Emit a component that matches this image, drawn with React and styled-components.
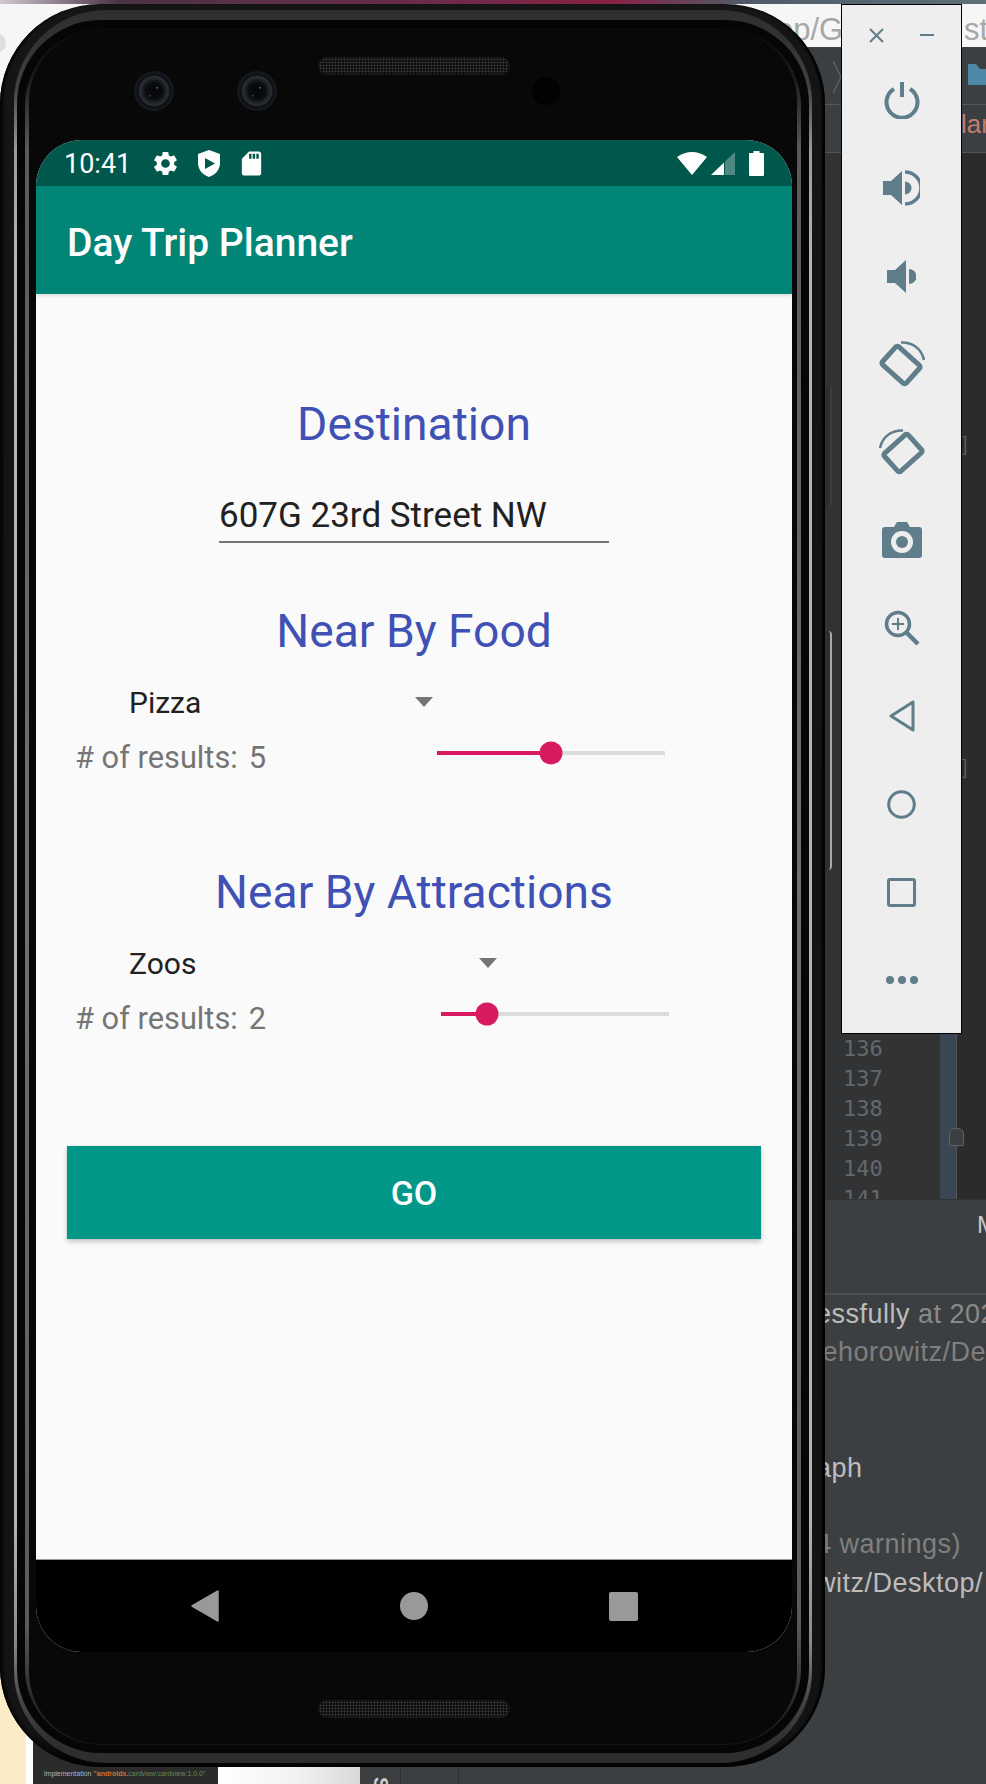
import React from 'react';
import styled, { createGlobalStyle } from 'styled-components';
import { MdSettings, MdSdCard } from 'react-icons/md';

const GlobalStyle = createGlobalStyle`
  html, body {
    margin: 0;
    padding: 0;
    background: #3c3f41;
  }
  * { box-sizing: border-box; }
`;

const PICKERS = [
  { title: 'Near By Food', choice: 'Pizza', spinner: 304, results: 5, sliderGap: 161, gapTop: 61 },
  { title: 'Near By Attractions', choice: 'Zoos', spinner: 368, results: 2, sliderGap: 165, gapTop: 89 }
];

const LINE_NUMBERS = [136, 137, 138, 139, 140, 141];

export default function App() {
  return (
    <Stage>
      <GlobalStyle />
      <Backdrop />
      <Phone />
      <EmulatorPanel />
    </Stage>
  );
}

function Backdrop() {
  return (
    <Desktop>
      <TitleStrip />
      <AddressBar>
        <span>op/G</span>
        <UrlRight>st</UrlRight>
      </AddressBar>
      <IdeToolbar>
        <Chevron viewBox="0 0 10 32"><path d="M1 0 L9 16 L1 32" /></Chevron>
        <Folder viewBox="0 0 18 21"><path d="M0 0 H8 L12 5 H18 V21 H0 Z" /></Folder>
      </IdeToolbar>
      <IdeTabs><TabLabel>lar</TabLabel></IdeTabs>
      <Editor>
        <Gutter>
          <LineNumbers>
            {LINE_NUMBERS.map(n => <LineNumber key={n}>{n}</LineNumber>)}
          </LineNumbers>
        </Gutter>
        <FoldColumn>
          <FoldMark />
        </FoldColumn>
        <CodeArea>
          <Bracket>]</Bracket>
          <Bracket $gap={300}>]</Bracket>
        </CodeArea>
      </Editor>
      <EditorTabs><EditorTabLabel>M</EditorTabLabel></EditorTabs>
      <ConsoleHead />
      <Console>
        <ConsoleRow>
          <strong>essfully</strong> <span>at 202</span>
        </ConsoleRow>
        <ConsoleRow $dim>iehorowitz/De</ConsoleRow>
        <ConsoleRow />
        <ConsoleRow />
        <ConsoleRow><strong>aph</strong></ConsoleRow>
        <ConsoleRow />
        <ConsoleRow $dim>4 warnings)</ConsoleRow>
        <ConsoleRow><strong>witz/Desktop/</strong></ConsoleRow>
      </Console>
      <PageCorner><PageDot /></PageCorner>
      <FootWindows>
        <CreamPane />
        <GradleCode>
          <Code>
            implementation <CodeKey>"androidx.</CodeKey><CodeString>cardview:cardview:1.0.0"</CodeString>
          </Code>
        </GradleCode>
        <PaperPane />
        <FootTab><FootTabLetter>S</FootTabLetter></FootTab>
        <EmptyFootTab />
      </FootWindows>
    </Desktop>
  );
}

function Phone() {
  return (
    <Handset>
      <SideButton $top={382} $height={120} />
      <SideButton $top={627} $height={239} $lit />
      <Body>
        <OuterRing>
          <Channel>
            <InnerRing>
              <Bezel>
                <TopBezel>
                  <CameraLens $left={105} />
                  <CameraLens $left={63} />
                  <TopSpeaker />
                  <FrontSensor />
                </TopBezel>
                <Screen>
                  <StatusBar>
                    <Clock>10:41</Clock>
                    <StatusIcons>
                      <MdSettings size={29} />
                      <ShieldIcon />
                      <MdSdCard size={29} />
                    </StatusIcons>
                    <SystemIcons>
                      <WifiIcon />
                      <SignalIcon />
                      <BatteryIcon />
                    </SystemIcons>
                  </StatusBar>
                  <AppBar>Day Trip Planner</AppBar>
                  <Content>
                    <Heading $gapTop={103}>Destination</Heading>
                    <AddressField>607G 23rd Street NW</AddressField>
                    {PICKERS.map(picker => (
                      <Picker key={picker.title} {...picker} />
                    ))}
                    <GoButton>GO</GoButton>
                  </Content>
                  <NavBar>
                    <NavBack viewBox="0 0 28 32"><path d="M27 1 V31 L1 16 Z" /></NavBack>
                    <NavHome />
                    <NavRecents />
                  </NavBar>
                </Screen>
                <BottomBezel>
                  <BottomSpeaker />
                </BottomBezel>
              </Bezel>
            </InnerRing>
          </Channel>
        </OuterRing>
      </Body>
    </Handset>
  );
}

function Picker({ title, choice, spinner, results, sliderGap, gapTop }) {
  return (
    <>
      <Heading $gapTop={gapTop}>{title}</Heading>
      <Spinner $width={spinner}>
        <span>{choice}</span>
        <SpinnerArrow />
      </Spinner>
      <ResultsRow>
        <ResultsLabel>
          <span># of results:</span>
          <span>{results}</span>
        </ResultsLabel>
        <Slider $gap={sliderGap}>
          <SliderFill style={{ width: `${results * 10}%` }} />
          <SliderThumb style={{ left: `${results * 10}%` }} />
        </Slider>
      </ResultsRow>
    </>
  );
}

function EmulatorPanel() {
  return (
    <Panel>
      <PanelHead>
        <PanelSvg width="15" height="15" viewBox="0 0 15 15"><Stroke $w={2} d="M1 1 L14 14 M14 1 L1 14" /></PanelSvg>
        <PanelSvg width="14" height="2" viewBox="0 0 14 2"><rect width="14" height="2" /></PanelSvg>
      </PanelHead>
      <PanelSlot>
        <PanelSvg width="36" height="37" viewBox="0 0 36 37">
          <Stroke $w={4} d="M10 7 A15.5 15.5 0 1 0 26 7" />
          <Stroke $w={4} d="M18 0 V15" />
        </PanelSvg>
      </PanelSlot>
      <PanelSlot>
        <PanelSvg width="37" height="36" viewBox="0 0 37 36">
          <path d="M0 11 H8 L19 1 V35 L8 25 H0 Z" />
          <path d="M22 11.5 A6.5 6.5 0 0 1 22 24.5 Z" />
          <Stroke $w={3.5} d="M22 2 A16 16 0 0 1 22 34" />
        </PanelSvg>
      </PanelSlot>
      <PanelSlot>
        <PanelSvg width="29" height="33" viewBox="0 0 29 33">
          <path d="M0 10 H8 L19 0 V33 L8 23 H0 Z" />
          <path d="M22 9 A7.5 7.5 0 0 1 22 24 Z" />
        </PanelSvg>
      </PanelSlot>
      <PanelSlot>
        <RotateIcon />
      </PanelSlot>
      <PanelSlot>
        <RotateIcon $flip />
      </PanelSlot>
      <PanelSlot>
        <PanelSvg width="40" height="36" viewBox="0 0 40 36">
          <path d="M3 5 H12 L15 0 H25 L28 5 H37 A3 3 0 0 1 40 8 V33 A3 3 0 0 1 37 36 H3 A3 3 0 0 1 0 33 V8 A3 3 0 0 1 3 5 Z" />
          <circle cx="20" cy="20" r="11" fill="#eeeeee" />
          <circle cx="20" cy="20" r="6" />
        </PanelSvg>
      </PanelSlot>
      <PanelSlot>
        <PanelSvg width="36" height="36" viewBox="0 0 36 36">
          <Stroke $w={3.5} as="circle" cx="14" cy="14" r="11.5" />
          <Stroke $w={2} d="M14 8 V20 M8 14 H20" />
          <Stroke $w={4.5} d="M22 22 L34 34" />
        </PanelSvg>
      </PanelSlot>
      <PanelSlot>
        <PanelSvg width="27" height="32" viewBox="0 0 27 32">
          <Stroke $w={3} $join d="M25 2 V30 L3 16 Z" />
        </PanelSvg>
      </PanelSlot>
      <PanelSlot>
        <PanelSvg width="29" height="29" viewBox="0 0 29 29">
          <Stroke $w={3} as="circle" cx="14.5" cy="14.5" r="12.8" />
        </PanelSvg>
      </PanelSlot>
      <PanelSlot>
        <PanelSvg width="29" height="29" viewBox="0 0 29 29">
          <Stroke $w={3} as="rect" x="1.5" y="1.5" width="26" height="26" rx="1.5" />
        </PanelSvg>
      </PanelSlot>
      <PanelSlot>
        <PanelSvg width="32" height="8" viewBox="0 0 32 8">
          <circle cx="4" cy="4" r="4" />
          <circle cx="16" cy="4" r="4" />
          <circle cx="28" cy="4" r="4" />
        </PanelSvg>
      </PanelSlot>
    </Panel>
  );
}

function RotateIcon({ $flip }) {
  return (
    <RotateSvg $flip={$flip} width="46" height="46" viewBox="0 0 46 46">
      <Stroke $w={5} $join as="rect" x="6" y="12" width="32" height="24" rx="2" transform="rotate(42 22 24)" />
      <Stroke $w={2.5} d="M22 1.5 C32 1 42 6 45 19" />
    </RotateSvg>
  );
}

function ShieldIcon() {
  return (
    <svg width="22" height="27" viewBox="0 0 22 27" fill="#fff">
      <path
        fillRule="evenodd"
        d="M11 0 L22 4 V13 C22 20 17 25 11 27 C5 25 0 20 0 13 V4 Z M7 8 V19 L17 13.5 Z"
      />
    </svg>
  );
}

function WifiIcon() {
  return (
    <svg width="30" height="23" viewBox="0 0 30 23" fill="#fff">
      <path d="M15 23 L0 5 Q15 -5 30 5 Z" />
    </svg>
  );
}

function SignalIcon() {
  return (
    <svg width="24" height="23" viewBox="0 0 24 23" fill="#fff">
      <path d="M13 10.5 V23 H0 Z" />
      <path d="M24 0 V23 H14 V9.5 Z" opacity="0.3" />
    </svg>
  );
}

function BatteryIcon() {
  return (
    <svg width="15" height="25" viewBox="0 0 15 25" fill="#fff">
      <path d="M4.5 0 H10.5 V2 H14 A1 1 0 0 1 15 3 V24 A1 1 0 0 1 14 25 H1 A1 1 0 0 1 0 24 V3 A1 1 0 0 1 1 2 H4.5 Z" />
    </svg>
  );
}

/* desktop behind the emulator */

const Stage = styled.div`
  position: relative;
  width: 986px;
  height: 1784px;
  overflow: hidden;
  font-family: Roboto, sans-serif;
`;

const Desktop = styled.div`
  position: absolute;
  inset: 0;
  display: flex;
  flex-flow: column nowrap;
  background: #3c3f41;
  font-family: 'Liberation Sans', sans-serif;
`;

const TitleStrip = styled.div`
  height: 4px;
  background: linear-gradient(to right, #cfc9cf 0, #4b3346 12%, #6d2b48 45%, #8a2147 62%, #4f5a66 75%, #5e7078 100%);
`;

const AddressBar = styled.div`
  height: 43px;
  display: flex;
  align-items: center;
  justify-content: space-between;
  padding: 8px 0 0 776px;
  background: #f6f6f6;
  font-size: 31px;
  line-height: 34px;
  color: #a8a8a8;
  overflow: hidden;
  white-space: nowrap;
`;

const UrlRight = styled.span`
  margin-right: -2px;
`;

const IdeToolbar = styled.div`
  height: 58px;
  display: flex;
  align-items: flex-start;
  justify-content: space-between;
  padding: 14px 0 0 832px;
  background: #3c3f41;
  border-bottom: 1px solid #55585a;
`;

const Chevron = styled.svg`
  width: 10px;
  height: 32px;
  fill: none;
  stroke: #5e6163;
  stroke-width: 1.5;
`;

const Folder = styled.svg`
  width: 18px;
  height: 21px;
  margin-top: 3px;
  fill: #4f87a6;
`;

const IdeTabs = styled.div`
  height: 48px;
  padding: 4px 0 0 961px;
  background: #3c3f41;
  border-bottom: 1px solid #505355;
  overflow: hidden;
`;

const TabLabel = styled.span`
  font-size: 26px;
  color: #c27d6c;
`;

const Editor = styled.div`
  height: 1046px;
  display: flex;
  flex-flow: row nowrap;
`;

const Gutter = styled.div`
  width: 940px;
  flex: none;
  display: flex;
  flex-flow: column nowrap;
  justify-content: flex-end;
  padding-left: 843px;
  background: #313335;
  overflow: hidden;
`;

const LineNumbers = styled.div`
  margin-bottom: -15px;
`;

const LineNumber = styled.div`
  height: 30px;
  line-height: 30px;
  font-family: 'DejaVu Sans Mono', monospace;
  font-size: 22px;
  color: #65686b;
`;

const FoldColumn = styled.div`
  position: relative;
  width: 17px;
  flex: none;
  background: #3a4654;
  border-right: 1px solid #555;
`;

const FoldMark = styled.div`
  position: absolute;
  right: -8px;
  bottom: 53px;
  width: 15px;
  height: 18px;
  background: #3c3f41;
  border: 1px solid #5e6163;
  border-radius: 6px 6px 1px 1px;
`;

const CodeArea = styled.div`
  flex: 1;
  padding: 280px 0 0 5px;
  background: #2b2b2b;
`;

const Bracket = styled.div`
  margin-top: ${p => p.$gap || 0}px;
  font-size: 20px;
  color: #5a5a5a;
`;

const EditorTabs = styled.div`
  height: 46px;
  padding: 11px 0 0 977px;
  background: #3c3f41;
  border-top: 1px solid #333;
  overflow: hidden;
`;

const EditorTabLabel = styled.span`
  font-size: 24px;
  color: #c8c8c8;
`;

const ConsoleHead = styled.div`
  height: 50px;
  background: #3c3f41;
  border-bottom: 2px solid #4b4e50;
`;

const Console = styled.div`
  flex: 1;
  padding-left: 816px;
  background: #3c3f41;
  font-size: 27px;
  letter-spacing: 0.5px;
  color: #8a8a8a;
  white-space: nowrap;
  overflow: hidden;

  strong {
    font-weight: 400;
    color: #bcbcbc;
  }
`;

const ConsoleRow = styled.div`
  height: 38.4px;
  line-height: 38.4px;
  color: ${p => (p.$dim ? '#7f7f7f' : '#8a8a8a')};
`;

const PageCorner = styled.div`
  position: absolute;
  left: 0;
  top: 4px;
  width: 60px;
  height: 100px;
  background: #f6f6f6;
`;

const PageDot = styled.div`
  position: absolute;
  left: -14px;
  top: 29px;
  width: 20px;
  height: 20px;
  border-radius: 50%;
  background: #dedede;
`;

const FootWindows = styled.div`
  position: absolute;
  left: 0;
  bottom: 0;
  height: 124px;
  display: flex;
  flex-flow: row nowrap;
`;

const CreamPane = styled.div`
  width: 33px;
  background: #fbecc8;
  border-right: 7px solid;
  border-image: linear-gradient(to right, #e39a3c 43%, #ffffff 43%) 1;
`;

const GradleCode = styled.div`
  width: 185px;
  display: flex;
  align-items: flex-end;
  padding: 0 0 6px 11px;
  background: #2b2b2b;
`;

const Code = styled.span`
  font-size: 7px;
  line-height: 8px;
  color: #a9b7c6;
  white-space: nowrap;
`;

const CodeKey = styled.span`
  font-weight: 700;
  color: #cc7832;
`;

const CodeString = styled.span`
  color: #6a8759;
`;

const PaperPane = styled.div`
  width: 142px;
  background: linear-gradient(to right, #ffffff, #f2f2f2 55%, #d9d9d9);
`;

const FootTab = styled.div`
  width: 41px;
  display: flex;
  align-items: flex-end;
  justify-content: center;
  background: #3c3f41;
  border-right: 1px solid #2f3133;
  overflow: hidden;
`;

const FootTabLetter = styled.span`
  writing-mode: vertical-rl;
  margin-bottom: -6px;
  font-size: 20px;
  font-weight: 700;
  color: #cfcfcf;
`;

const EmptyFootTab = styled.div`
  width: 58px;
  background: #3c3f41;
  border-right: 1px solid #2f3133;
`;

/* the phone frame */

const Handset = styled.div`
  position: absolute;
  left: 0;
  top: 4px;
  width: 825px;
  height: 1763px;
`;

const SideButton = styled.div`
  position: absolute;
  top: ${p => p.$top}px;
  right: -7px;
  width: 8px;
  height: ${p => p.$height}px;
  background: #2c2e30;
  border-right: 2px solid ${p => (p.$lit ? '#a9a9a9' : '#3a3c3e')};
  border-radius: 0 4px 4px 0;
`;

const Body = styled.div`
  position: relative;
  height: 100%;
  padding: 6px 13px 4px 14px;
  background: linear-gradient(to bottom, #151515 0, #131313 98%, #040404 99.6%);
  border-radius: 100px;
  box-shadow: inset 4px 0 2px -1px #060606, inset -4px 0 2px -1px #020202;
`;

const OuterRing = styled.div`
  height: 100%;
  padding: 10px 3px 10px 3px;
  border-radius: 92px;
  background: linear-gradient(
    to bottom,
    #2f2f2f 0,
    #333 2%,
    #444 4.5%,
    #9a9a9a 8%,
    #b5b5b5 14%,
    #b5b5b5 86%,
    #8a8a8a 93%,
    #444 96.5%,
    #2e2e2e 99%
  );
`;

const Channel = styled.div`
  height: 100%;
  padding: 9px 8px 8px;
  border-radius: 84px;
  background: #060606;
`;

const InnerRing = styled.div`
  height: 100%;
  padding: 1px 4px;
  border-radius: 76px;
  background: linear-gradient(to bottom, #0b0b0b 0, #1c1c1c 3%, #5a5a5a 7%, #707070 50%, #5a5a5a 93%, #222 98%, #141414 100%);
`;

const Bezel = styled.div`
  height: 100%;
  display: flex;
  flex-flow: column nowrap;
  padding: 0 5px 0 7px;
  border-radius: 72px;
  background: #080808;
`;

const TopBezel = styled.div`
  height: 110px;
  flex: none;
  display: flex;
  flex-flow: row nowrap;
  align-items: flex-start;
  margin: 0 -5px 0 -7px;
`;

const CameraLens = styled.div`
  width: 40px;
  height: 40px;
  flex: none;
  margin: 41px 0 0 ${p => p.$left}px;
  border-radius: 50%;
  background:
    radial-gradient(circle at 58% 42%, #8a8fb0 0, transparent 4%),
    radial-gradient(circle at 40% 62%, #6b6f80 0, transparent 3%),
    radial-gradient(circle at 50% 50%, #05060a 0, #0a0c10 30%, #2b2f36 50%, #0a0b0e 58%, #14181d 62%, #14181d 100%);
`;

const Mesh = styled.div`
  width: 192px;
  height: 18px;
  flex: none;
  border-radius: 9px;
  border: 1px solid #191919;
  background-color: #0d0d0d;
  background-image: radial-gradient(circle, #3a3a3a 0.9px, transparent 1.1px);
  background-size: 3px 3px;
`;

const TopSpeaker = styled(Mesh)`
  margin: 27px 0 0 41px;
`;

const FrontSensor = styled.div`
  width: 28px;
  height: 28px;
  flex: none;
  margin: 47px 0 0 22px;
  border-radius: 50%;
  background: #020202;
`;

const BottomBezel = styled.div`
  height: 92px;
  flex: none;
  display: flex;
  justify-content: center;
  padding-top: 48px;
`;

const BottomSpeaker = styled(Mesh)``;

/* the app on the screen */

const Screen = styled.div`
  height: 1512px;
  flex: none;
  display: flex;
  flex-flow: column nowrap;
  border-radius: 46px;
  background: #fafafa;
  overflow: hidden;
`;

const StatusBar = styled.div`
  height: 46px;
  flex: none;
  display: flex;
  align-items: center;
  padding: 0 28px;
  background: #00574b;
  color: #fff;
`;

const Clock = styled.span`
  padding-top: 2px;
  font-size: 27px;
  line-height: 44px;
`;

const StatusIcons = styled.div`
  display: flex;
  align-items: center;
  gap: 17.5px;
  margin-left: 20px;

  svg { fill: #fff; display: block; }
`;

const SystemIcons = styled.div`
  display: flex;
  align-items: center;
  gap: 4px;
  margin-left: auto;

  svg:last-child { margin-left: 10px; }
`;

const AppBar = styled.div`
  height: 108px;
  flex: none;
  position: relative;
  display: flex;
  align-items: center;
  padding: 5px 0 0 31px;
  background: #008577;
  color: #fff;
  font-size: 39px;
  font-weight: 500;
  box-shadow: 0 2px 4px rgba(0, 0, 0, 0.12);
`;

const Content = styled.div`
  flex: 1;
  display: flex;
  flex-flow: column nowrap;
  align-items: center;
  background: #fafafa;
`;

const Heading = styled.div`
  margin-top: ${p => p.$gapTop}px;
  font-size: 46.2px;
  line-height: 54px;
  color: #3f51b5;
`;

const AddressField = styled.div`
  width: 390px;
  margin-top: 45px;
  padding-bottom: 5px;
  border-bottom: 2px solid #757575;
  font-size: 35px;
  line-height: 40px;
  color: #212121;
`;

const Spinner = styled.div`
  align-self: flex-start;
  width: ${p => p.$width}px;
  height: 36px;
  margin: 27px 0 0 93px;
  display: flex;
  align-items: center;
  justify-content: space-between;
  box-sizing: content-box;
  font-size: 30px;
  line-height: 36px;
  color: #212121;
`;

const SpinnerArrow = styled.div`
  width: 0;
  height: 0;
  margin-top: -2px;
  border-style: solid;
  border-width: 10px 9.5px 0;
  border-color: #757575 transparent transparent;
`;

const ResultsRow = styled.div`
  align-self: stretch;
  height: 36px;
  margin-top: 19px;
  padding-left: 39px;
  display: flex;
  align-items: flex-start;
`;

const ResultsLabel = styled.div`
  width: 201px;
  flex: none;
  display: flex;
  gap: 11px;
  font-size: 30.8px;
  line-height: 36px;
  color: #757575;
  white-space: nowrap;
`;

const Slider = styled.div`
  position: relative;
  width: 228px;
  height: 4px;
  margin: 11px 0 0 ${p => p.$gap}px;
  background: #dcdcdc;
`;

const SliderFill = styled.div`
  height: 100%;
  background: #d81b60;
`;

const SliderThumb = styled.div`
  position: absolute;
  top: 50%;
  width: 23px;
  height: 23px;
  border-radius: 50%;
  background: #d81b60;
  transform: translate(-50%, -50%);
`;

const GoButton = styled.div`
  width: 694px;
  height: 93px;
  margin-top: 109px;
  display: flex;
  align-items: center;
  justify-content: center;
  padding-top: 1px;
  background: #009688;
  color: #fff;
  font-size: 34px;
  font-weight: 500;
  box-shadow: 0 3px 5px rgba(0, 0, 0, 0.2), 0 0 1px rgba(0, 0, 0, 0.2);
`;

const NavBar = styled.div`
  height: 93px;
  flex: none;
  display: flex;
  align-items: center;
  justify-content: center;
  gap: 181px;
  background: #000;
  border-top: 1px solid #9a9a9a;
`;

const NavBack = styled.svg`
  width: 28px;
  height: 32px;
  fill: #999;
  stroke: #999;
  stroke-width: 1.5;
  stroke-linejoin: round;
`;

const NavHome = styled.div`
  width: 28px;
  height: 28px;
  border-radius: 50%;
  background: #999;
`;

const NavRecents = styled.div`
  width: 29px;
  height: 29px;
  border-radius: 2px;
  background: #999;
`;

/* emulator side toolbar */

const Panel = styled.div`
  position: absolute;
  left: 841px;
  top: 4px;
  width: 121px;
  height: 1030px;
  display: flex;
  flex-flow: column nowrap;
  background: #eeeeee;
  border: 1px solid #000;
`;

const PanelHead = styled.div`
  height: 51px;
  flex: none;
  display: flex;
  align-items: center;
  justify-content: space-between;
  padding: 9px 27px 0 27px;
`;

const PanelSlot = styled.div`
  height: 88px;
  flex: none;
  display: flex;
  align-items: center;
  justify-content: center;
`;

const PanelSvg = styled.svg`
  display: block;
  fill: #607d8b;
`;

const RotateSvg = styled(PanelSvg)`
  transform: ${p => (p.$flip ? 'scaleX(-1)' : 'none')};
`;

const Stroke = styled.path`
  fill: none;
  stroke: #607d8b;
  stroke-width: ${p => p.$w};
  stroke-linejoin: ${p => (p.$join ? 'round' : 'miter')};
`;
